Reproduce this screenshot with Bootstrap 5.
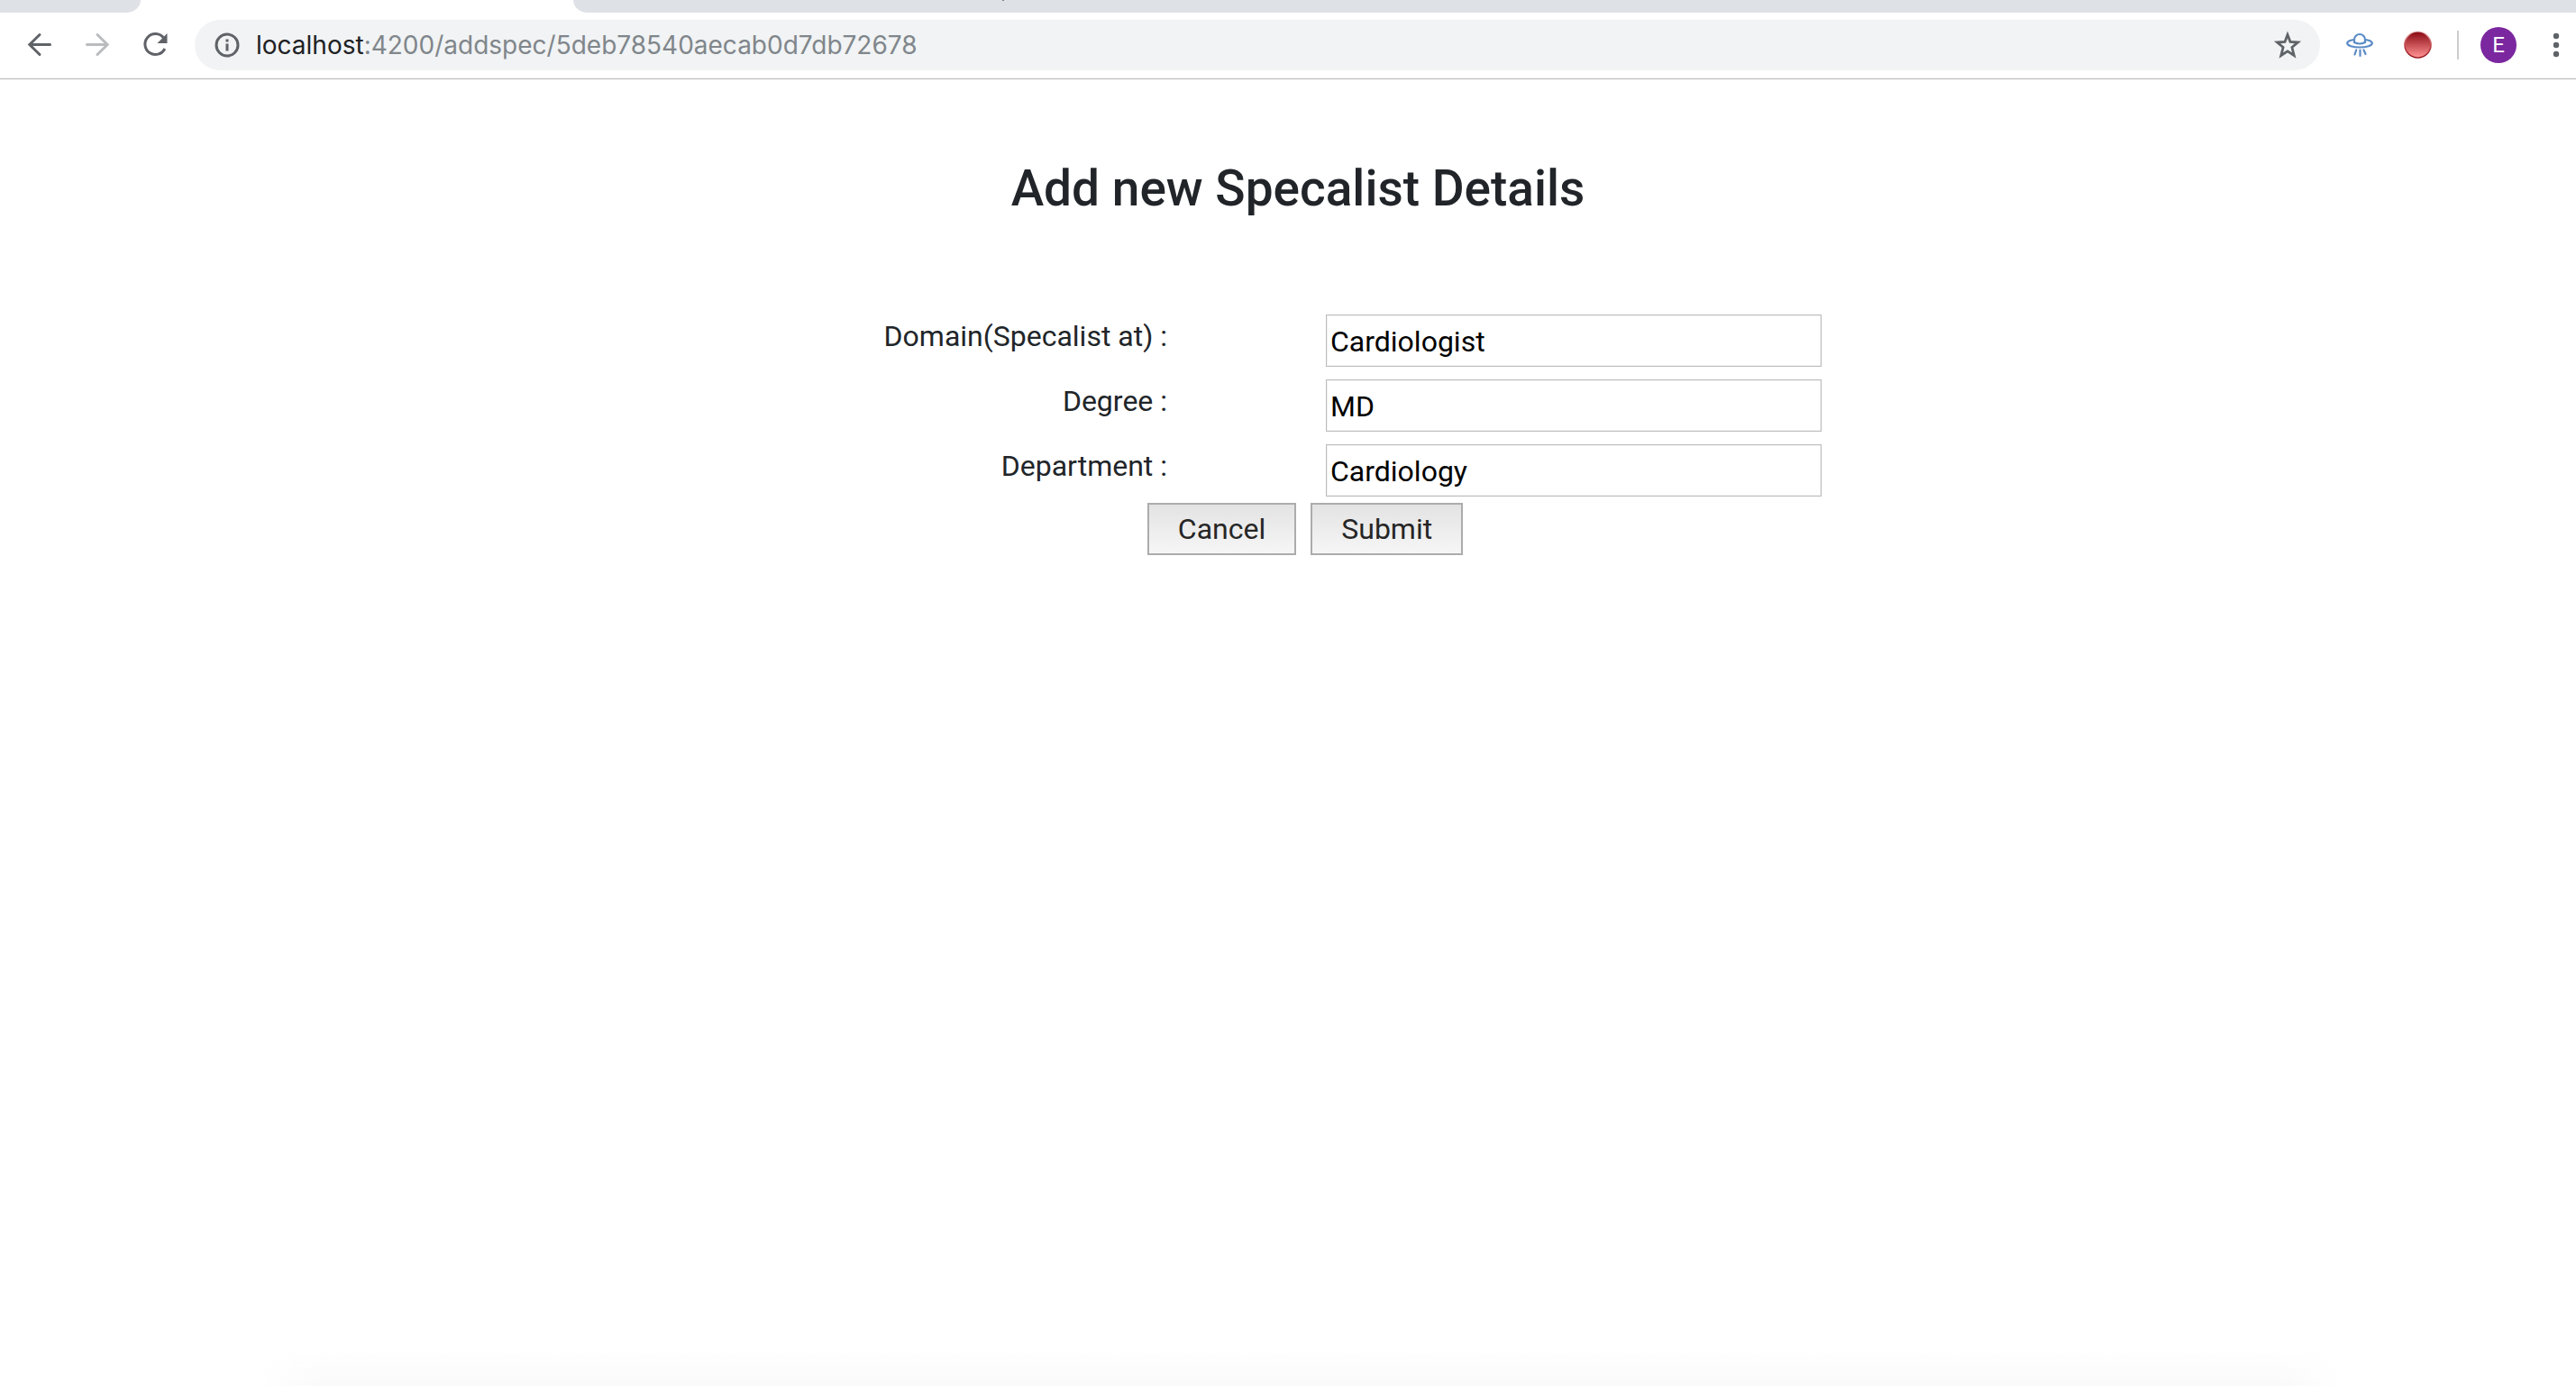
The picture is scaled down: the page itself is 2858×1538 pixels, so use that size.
<!DOCTYPE html>
<html lang="en">
<head>
<meta charset="utf-8">
<meta name="viewport" content="width=device-width, initial-scale=1">
<title>Add new Specalist Details</title>
<link href="https://cdn.jsdelivr.net/npm/bootstrap@5.3.0/dist/css/bootstrap.min.css" rel="stylesheet">
<style>
  body { font-family: Roboto, "Liberation Sans", sans-serif; font-size: 32px; line-height: 48px; color: #212529; background: #fff; }
  svg { display: block; }

  /* browser chrome */
  .tab-strip { height: 14px; }
  .tab-idle { background: #dee1e6; }
  .tab-first { width: 156px; border-bottom-right-radius: 16px 14px; }
  .tab-open { width: 480px; }
  .tab-rest { border-bottom-left-radius: 16px 14px; padding-left: 476px; }
  .tab-rest::before { content: ""; display: block; width: 2px; height: 1px; background: #7d8085; }
  .toolbar-row { height: 74px; padding: 8px 16px 9px 28px; border-bottom: 1px solid #b6b6b6; }
  .tool-btn { border: 0; background: none; padding: 0; color: #5f6368; }
  .tool-btn:disabled { color: #babcbe; }
  .address { height: 56px; border-radius: 28px; background: #f1f3f4; padding: 0 18px 0 20px; margin-left: 26px; font-family: Inter, "Liberation Sans", sans-serif; font-size: 28px; color: #80868b; }
  .address b { font-weight: 400; color: #202124; }
  .bar-sep { width: 2px; height: 32px; background: #ccc; }
  .avatar { width: 40px; height: 40px; background: #7b279f; color: #fff; font-size: 24px; line-height: 40px; }

  /* page */
  main { padding: 88px 0 0 22px; }
  .page-title { font-size: 55px; line-height: 66px; font-weight: 500; margin-bottom: 107px; }
  .spec-form { max-width: 1162px; }
  .field-list { gap: 14px; }
  .field-label { width: 436px; }
  .field-input { width: 550px; height: 58px; padding: 2px 4px 0; border: 1px solid #bcbcbc; box-shadow: inset 0 0 0 1px #f2f2f2; color: #000; }
  .actions { padding: 7px 0 0 16px; }
  .form-btn { height: 58px; padding: 0 32px; border: 2px solid #acacac; background: linear-gradient(#e3e3e3, #f6f6f6); color: #262626; line-height: 54px; }
  .dock-shade { left: 10%; right: 9%; height: 42px; background: linear-gradient(transparent, #fafafa); -webkit-mask-image: linear-gradient(90deg, transparent, #000 70px, #000 calc(100% - 70px), transparent); pointer-events: none; }
</style>
<script src="https://cdn.jsdelivr.net/npm/bootstrap@5.3.0/dist/js/bootstrap.bundle.min.js"></script>
</head>
<body>
<header>
  <div class="tab-strip d-flex">
    <div class="tab-idle tab-first"></div>
    <div class="tab-open"></div>
    <div class="tab-idle tab-rest flex-grow-1"></div>
  </div>
  <div class="toolbar-row d-flex align-items-center">
    <button class="tool-btn" type="button" aria-label="Back">
      <svg width="32" height="32" viewBox="0 0 32 32" fill="none" stroke="currentColor" stroke-width="3" stroke-linecap="round"><path d="M27.500 15.500H5M16 4.500L4.800 15.500L16 26.500"/></svg>
    </button>
    <button class="tool-btn ms-4 ps-2" type="button" aria-label="Forward" disabled>
      <svg width="32" height="32" viewBox="0 0 32 32" fill="none" stroke="currentColor" stroke-width="3" stroke-linecap="round"><path d="M4.500 15.500H27M16 4.500L27.200 15.500L16 26.500"/></svg>
    </button>
    <button class="tool-btn ms-4 ps-2" type="button" aria-label="Reload">
      <svg width="34" height="32" viewBox="0 0 34 32" fill="none"><path d="M25.500 8A11.500 11.500 0 1 0 26.800 20" stroke="currentColor" stroke-width="3"/><path d="M29.500 3V14H18.500Z" fill="currentColor"/></svg>
    </button>
    <div class="address d-flex align-items-center flex-grow-1">
      <svg width="32" height="32" viewBox="0 0 32 32" fill="none"><circle cx="16" cy="16" r="12" stroke="#5f6368" stroke-width="3"/><path d="M16 14.500V22.500M16 9.500V12.500" stroke="#5f6368" stroke-width="3"/></svg>
      <div class="flex-grow-1 ms-3"><b>localhost</b>:4200/addspec/5deb78540aecab0d7db72678</div>
      <button class="tool-btn" type="button" aria-label="Bookmark this page">
        <svg width="36" height="36" viewBox="0 0 36 36" fill="none" stroke="currentColor" stroke-width="2.800"><path d="M18 6.500L21 14.500L29.500 15L22.900 20.500L25.200 29.500L18 24.800L10.800 29.500L13.100 20.500L6.500 15L15 14.500Z"/></svg>
      </button>
    </div>
    <button class="tool-btn ms-4" type="button" aria-label="UFO extension">
      <svg width="40" height="36" viewBox="0 0 40 36" fill="none" stroke="#5b8bc6" stroke-width="2.200" stroke-linecap="round"><ellipse cx="20" cy="16" rx="13.800" ry="4.500" fill="#fff"/><path d="M14 15V12A6 6 0 0 1 26 12V15Q20 18 14 15Z" fill="#fff"/><path d="M16.200 23.500L14.500 28.500M20.500 23.500V30M24.500 23.500L26.500 28"/></svg>
    </button>
    <button class="tool-btn ms-4" type="button" aria-label="Record">
      <svg width="40" height="36" viewBox="0 0 40 36"><defs><linearGradient id="rec" x2="0" y2="1"><stop offset="0" stop-color="#8b0b14"/><stop offset="1" stop-color="#ff9292"/></linearGradient><linearGradient id="rim" x2="0" y2="1"><stop offset="0" stop-color="#f3dcdc"/><stop offset=".500" stop-color="#c0444a"/><stop offset="1" stop-color="#8b0b14"/></linearGradient></defs><circle cx="20.500" cy="17.500" r="15.300" fill="url(#rim)"/><circle cx="20.500" cy="17.500" r="13.900" fill="url(#rec)"/></svg>
    </button>
    <div class="bar-sep ms-4"></div>
    <div class="avatar rounded-circle text-center ms-4">E</div>
    <button class="tool-btn ms-4" type="button" aria-label="Menu">
      <svg width="26" height="36" viewBox="0 0 26 36" fill="currentColor"><circle cx="20" cy="8" r="3.200"/><circle cx="20" cy="18" r="3.200"/><circle cx="20" cy="28" r="3.200"/></svg>
    </button>
  </div>
</header>

<main>
  <h1 class="page-title text-center">Add new Specalist Details</h1>
  <form class="spec-form mx-auto">
    <div class="field-list d-flex flex-column">
      <div class="d-flex justify-content-between align-items-start">
        <label class="field-label text-end" for="domain">Domain(Specalist at) :</label>
        <input class="field-input" id="domain" type="text" value="Cardiologist">
      </div>
      <div class="d-flex justify-content-between align-items-start">
        <label class="field-label text-end" for="degree">Degree :</label>
        <input class="field-input" id="degree" type="text" value="MD">
      </div>
      <div class="d-flex justify-content-between align-items-start">
        <label class="field-label text-end" for="department">Department :</label>
        <input class="field-input" id="department" type="text" value="Cardiology">
      </div>
    </div>
    <div class="actions d-flex justify-content-center gap-3">
      <button class="form-btn" type="button">Cancel</button>
      <button class="form-btn" type="submit">Submit</button>
    </div>
  </form>
</main>
<div class="dock-shade position-fixed bottom-0"></div>
</body>
</html>
